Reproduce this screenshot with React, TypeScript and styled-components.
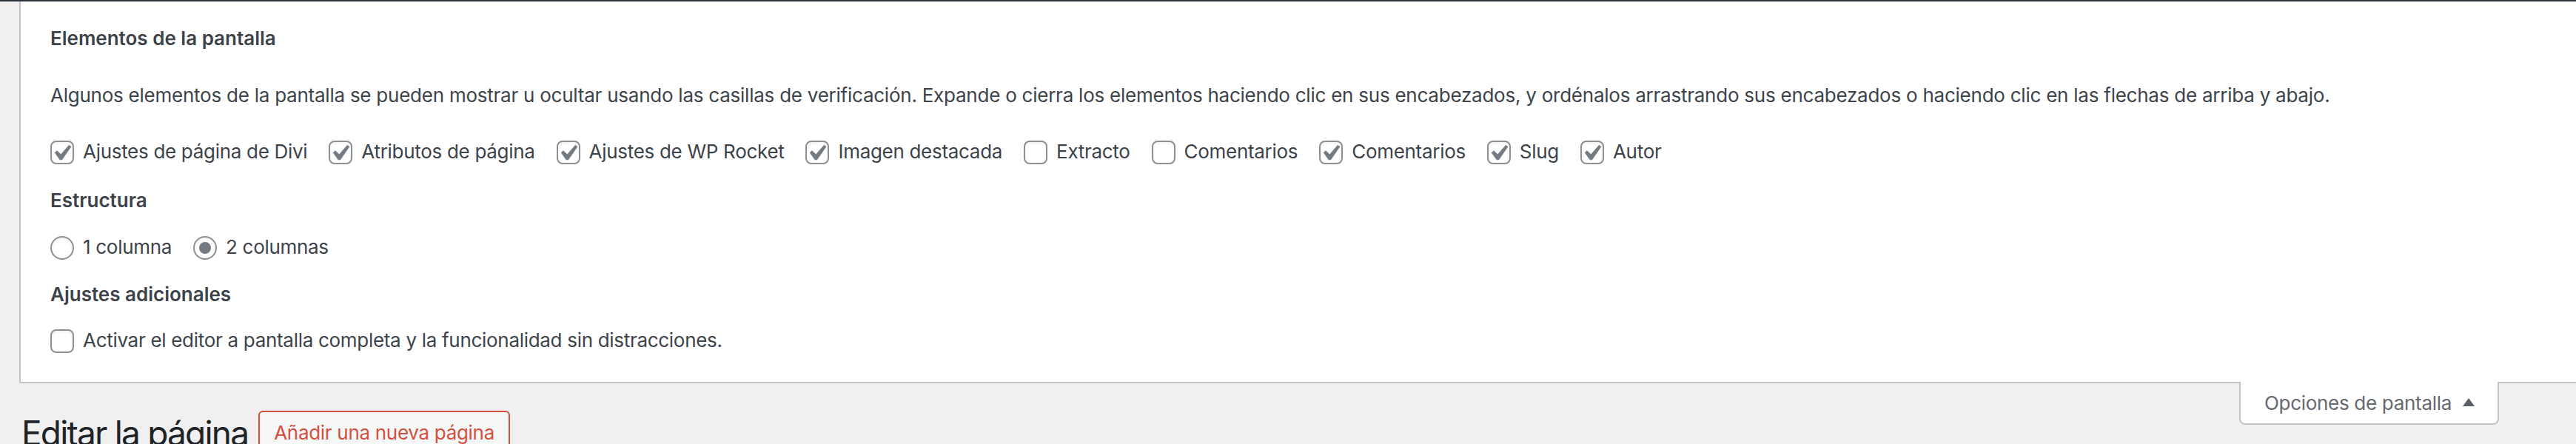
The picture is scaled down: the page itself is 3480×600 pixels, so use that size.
import React from "react";
import styled, { createGlobalStyle } from "styled-components";

const GlobalStyle = createGlobalStyle`
  html, body { margin: 0; padding: 0; background: #f0f0f1; }
  body {
    font-family: Inter, "Noto Sans", "Liberation Sans", sans-serif;
    color: #3c434a;
    letter-spacing: -0.3px;
    overflow: hidden;
  }
`;

const Page = styled.div`
  width: 3480px;
  min-height: 600px;
  background: #f0f0f1;
  border-top: 2px solid #2c3338;
`;

const Content = styled.div`
  padding-left: 26px;
`;

const ScreenMeta = styled.section`
  background: #ffffff;
  border-left: 2px solid #c3c4c7;
  border-bottom: 2px solid #c3c4c7;
  padding: 30px 40px 36px;
`;

const Legend = styled.div<{ $gap?: number }>`
  font-size: 26px;
  font-weight: 600;
  line-height: 40px;
  letter-spacing: 0;
  color: #3c434a;
  margin-top: ${(p) => p.$gap ?? 0}px;
`;

const Description = styled.p`
  margin: 37px 0 0;
  font-size: 26px;
  line-height: 40px;
  letter-spacing: -0.24px;
  color: #3c434a;
`;

const OptionRow = styled.div<{ $gap: number; $spacing: number }>`
  display: flex;
  align-items: center;
  flex-wrap: wrap;
  column-gap: ${(p) => p.$spacing}px;
  height: 40px;
  margin-top: ${(p) => p.$gap}px;
`;

const OptionLabel = styled.label<{ $gap: number }>`
  display: inline-flex;
  align-items: center;
  gap: ${(p) => p.$gap}px;
  font-size: 26px;
  line-height: 40px;
  color: #3c434a;
  white-space: nowrap;
  cursor: pointer;
`;

const Box = styled.span<{ $round?: boolean }>`
  flex: none;
  box-sizing: border-box;
  width: 32px;
  height: 32px;
  border: 2px solid #8c8f94;
  border-radius: ${(p) => (p.$round ? "50%" : "8px")};
  background: #ffffff;
  box-shadow: inset 0 2px 4px rgba(0, 0, 0, 0.06);
  display: flex;
  align-items: center;
  justify-content: center;
  margin-top: 2px;
`;

const Dot = styled.span`
  width: 16px;
  height: 16px;
  border-radius: 50%;
  background: #737a81;
`;

const CheckSvg = styled.svg`
  width: 28px;
  height: 28px;
  overflow: visible;
`;

const Check = () => (
  <CheckSvg viewBox="3.81 2.857 13.33 13.33">
    <path
      d="M14.83 4.89l1.34.94-5.81 8.38H9.02L5.78 9.67l1.34-1.25 2.57 2.4z"
      fill="#737a81"
      stroke="#737a81"
      strokeWidth="0.35"
      strokeLinejoin="round"
    />
  </CheckSvg>
);

const Checkbox = ({ label, checked }: { label: string; checked: boolean }) => (
  <OptionLabel $gap={12}>
    <Box>{checked && <Check />}</Box>
    <span>{label}</span>
  </OptionLabel>
);

const Radio = ({ label, checked }: { label: string; checked: boolean }) => (
  <OptionLabel $gap={12}>
    <Box $round>{checked && <Dot />}</Box>
    <span>{label}</span>
  </OptionLabel>
);

const MetaTab = styled.button`
  float: right;
  margin: -2px 104px 0 0;
  display: flex;
  align-items: center;
  gap: 15px;
  box-sizing: border-box;
  height: 58px;
  padding: 2px 31px 0 32px;
  background: #ffffff;
  border: 2px solid #c3c4c7;
  border-top: none;
  border-radius: 0 0 8px 8px;
  font-family: inherit;
  font-size: 26px;
  letter-spacing: -0.3px;
  line-height: 40px;
  white-space: nowrap;
  color: #646970;
  cursor: pointer;
`;

const Arrow = styled.span`
  flex: none;
  width: 0;
  height: 0;
  border-left: 8px solid transparent;
  border-right: 8px solid transparent;
  border-bottom: 11px solid #5a6067;
  margin-top: -4px;
`;

const HeadingRow = styled.div`
  display: flex;
  align-items: flex-start;
  gap: 14px;
  padding: 37px 0 0 3px;
`;

const Title = styled.h1`
  margin: 0;
  font-size: 46px;
  font-weight: 400;
  line-height: 60px;
  letter-spacing: -1.8px;
  color: #1d2327;
`;

const AddButton = styled.a`
  display: inline-block;
  box-sizing: border-box;
  width: 340px;
  padding: 8px 19px;
  font-size: 26px;
  line-height: 40px;
  color: #d2503f;
  background: #f6f7f7;
  border: 2px solid #d2503f;
  border-radius: 6px;
  text-decoration: none;
  white-space: nowrap;
`;

const boxes: { label: string; checked: boolean }[] = [
  { label: "Ajustes de página de Divi", checked: true },
  { label: "Atributos de página", checked: true },
  { label: "Ajustes de WP Rocket", checked: true },
  { label: "Imagen destacada", checked: true },
  { label: "Extracto", checked: false },
  { label: "Comentarios", checked: false },
  { label: "Comentarios", checked: true },
  { label: "Slug", checked: true },
  { label: "Autor", checked: true },
];

export default function App() {
  return (
    <>
      <GlobalStyle />
      <Page>
        <Content>
          <ScreenMeta>
            <Legend>Elementos de la pantalla</Legend>
            <Description>
              Algunos elementos de la pantalla se pueden mostrar u ocultar usando las casillas de verificación. Expande o
              cierra los elementos haciendo clic en sus encabezados, y ordénalos arrastrando sus encabezados o haciendo
              clic en las flechas de arriba y abajo.
            </Description>
            <OptionRow $gap={36} $spacing={29}>
              {boxes.map((b, i) => (
                <Checkbox key={i} label={b.label} checked={b.checked} />
              ))}
            </OptionRow>
            <Legend $gap={26}>Estructura</Legend>
            <OptionRow $gap={23} $spacing={29}>
              <Radio label="1 columna" checked={false} />
              <Radio label="2 columnas" checked={true} />
            </OptionRow>
            <Legend $gap={24}>Ajustes adicionales</Legend>
            <OptionRow $gap={22} $spacing={29}>
              <Checkbox label="Activar el editor a pantalla completa y la funcionalidad sin distracciones." checked={false} />
            </OptionRow>
          </ScreenMeta>
          <MetaTab>
            <span>Opciones de pantalla</span>
            <Arrow />
          </MetaTab>
          <HeadingRow>
            <Title>Editar la página</Title>
            <AddButton href="#">Añadir una nueva página</AddButton>
          </HeadingRow>
        </Content>
      </Page>
    </>
  );
}
